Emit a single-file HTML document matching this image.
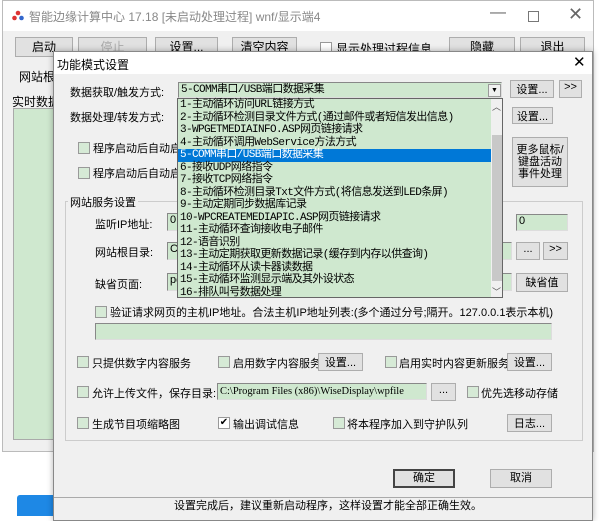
<!DOCTYPE html>
<html><head><meta charset="utf-8"><style>
*{box-sizing:border-box;margin:0;padding:0}
body{width:600px;height:516px;overflow:hidden;background:#fff;font-family:"Liberation Sans","Noto Sans CJK SC",sans-serif;font-size:11px;color:#000;position:relative}
.a{position:absolute;white-space:nowrap}
.btn{position:absolute;background:#e1e1e1;border:1px solid #adadad;text-align:center;font-size:11px}
.cb{position:absolute;width:12px;height:12px;border:1px solid #999;background:#d6ead6}
.in{position:absolute;background:#cfe8cf;border:1px solid #888;border-right-color:#ddd;border-bottom-color:#ddd;font-size:11px;padding-left:2px;overflow:hidden}
.it{position:absolute;left:2px;height:12.5px;line-height:12.5px;font-size:11px;font-family:"Liberation Mono","Noto Sans CJK SC",monospace;letter-spacing:-0.6px}
</style></head><body>
<!-- main window -->
<div class="a" style="left:2px;top:0;width:592px;height:452px;background:#f0f0f0;border:1px solid #bbb"></div>
<div class="a" style="left:3px;top:1px;width:590px;height:30px;background:#fff"></div>
<svg class="a" style="left:12px;top:10px" width="12" height="11"><circle cx="6" cy="3" r="2.3" fill="#d33"/><circle cx="2.5" cy="8" r="2.3" fill="#d33"/><circle cx="9.5" cy="8" r="2.3" fill="#36c"/></svg>
<div class="a" style="left:29px;top:8px;color:#888;font-size:12px">智能边缘计算中心 17.18 [未启动处理过程] wnf/显示端4</div>
<div class="a" style="left:490px;top:4px;color:#666;font-size:16px">—</div>
<div class="a" style="left:528px;top:11px;width:11px;height:11px;border:1px solid #777"></div>
<div class="a" style="left:568px;top:4px;color:#666;font-size:18px">✕</div>
<div class="btn" style="left:15px;top:37px;width:58px;height:20px;font-size:12px">启动</div>
<div class="btn" style="left:78px;top:37px;width:69px;height:20px;color:#aaa;font-size:12px">停止</div>
<div class="btn" style="left:155px;top:37px;width:63px;height:20px;font-size:12px">设置...</div>
<div class="btn" style="left:232px;top:37px;width:65px;height:20px;font-size:12px">清空内容</div>
<div class="cb" style="left:320px;top:42px;background:#fff"></div>
<div class="a" style="left:336px;top:40px;font-size:12px">显示处理过程信息</div>
<div class="btn" style="left:449px;top:37px;width:66px;height:20px;font-size:12px">隐藏</div>
<div class="btn" style="left:520px;top:37px;width:65px;height:20px;font-size:12px">退出</div>
<div class="a" style="left:19px;top:68px;font-size:12px">网站根</div>
<div class="a" style="left:12px;top:93px;font-size:12px">实时数据</div>
<div class="a" style="left:13px;top:108px;width:45px;height:332px;background:#cfe8cf;border:1px solid #aaa"></div>
<div class="a" style="left:3px;top:452px;width:50px;height:64px;background:#fff"></div>
<div class="a" style="left:17px;top:495px;width:40px;height:21px;background:#1e88e5;border-radius:3px 0 0 0"></div>
<!-- dialog -->
<div class="a" style="left:53px;top:51px;width:540px;height:470px;background:#f0f0f0;border:1px solid #888;box-shadow:0 0 6px rgba(0,0,0,.3)"></div>
<div class="a" style="left:54px;top:52px;width:538px;height:22px;background:#fff"></div>
<div class="a" style="left:57px;top:56px;font-size:12px">功能模式设置</div>
<div class="a" style="left:573px;top:53px;font-size:15px">✕</div>
<div class="a" style="left:70px;top:84px">数据获取/触发方式:</div>
<div class="a" style="left:70px;top:109px">数据处理/转发方式:</div>
<div class="in" style="left:178px;top:82px;width:324px;height:16px;line-height:14px;font-family:'Liberation Mono','Noto Sans CJK SC',monospace;letter-spacing:-0.6px">5-COMM串口/USB端口数据采集</div>
<div class="a" style="left:488px;top:84px;width:13px;height:13px;background:#f0f0f0;border:1px solid #999;font-size:7px;text-align:center;line-height:12px">▼</div>
<div class="btn" style="left:510px;top:80px;width:44px;height:18px">设置...</div>
<div class="btn" style="left:559px;top:80px;width:23px;height:18px">&gt;&gt;</div>
<div class="btn" style="left:512px;top:107px;width:41px;height:17px">设置...</div>
<div class="cb" style="left:78px;top:142px"></div><div class="a" style="left:93px;top:140px">程序启动后自动启</div>
<div class="cb" style="left:78px;top:167px"></div><div class="a" style="left:93px;top:165px">程序启动后自动启</div>
<div class="btn" style="left:512px;top:137px;width:56px;height:50px;line-height:12px;padding-top:6px">更多鼠标/<br>键盘活动<br>事件处理</div>
<!-- group -->
<div class="a" style="left:65px;top:201px;width:518px;height:240px;border:1px solid #ccc"></div>
<div class="a" style="left:68px;top:194px;background:#f0f0f0;padding:0 2px">网站服务设置</div>
<div class="a" style="left:95px;top:216px">监听IP地址:</div>
<div class="a" style="left:95px;top:244px">网站根目录:</div>
<div class="a" style="left:95px;top:276px">缺省页面:</div>
<div class="in" style="left:167px;top:213px;width:20px;height:18px">0.</div>
<div class="in" style="left:167px;top:242px;width:20px;height:18px">C:</div>
<div class="in" style="left:167px;top:273px;width:20px;height:18px">pc</div>
<div class="in" style="left:490px;top:242px;width:22px;height:18px;border-left:none"></div>
<div class="in" style="left:490px;top:273px;width:22px;height:18px;border-left:none"></div>
<div class="in" style="left:516px;top:214px;width:52px;height:17px">0</div>
<div class="btn" style="left:516px;top:242px;width:24px;height:18px">...</div>
<div class="btn" style="left:543px;top:242px;width:25px;height:18px">&gt;&gt;</div>
<div class="btn" style="left:516px;top:273px;width:52px;height:19px">缺省值</div>
<div class="cb" style="left:95px;top:306px"></div>
<div class="a" style="left:110px;top:304px">验证请求网页的主机IP地址。合法主机IP地址列表:(多个通过分号;隔开。127.0.0.1表示本机)</div>
<div class="in" style="left:95px;top:323px;width:457px;height:17px"></div>
<div class="cb" style="left:77px;top:356px"></div><div class="a" style="left:92px;top:355px">只提供数字内容服务</div>
<div class="cb" style="left:218px;top:356px"></div><div class="a" style="left:233px;top:355px">启用数字内容服务</div>
<div class="btn" style="left:318px;top:353px;width:45px;height:18px">设置...</div>
<div class="cb" style="left:385px;top:356px"></div><div class="a" style="left:399px;top:355px">启用实时内容更新服务</div>
<div class="btn" style="left:507px;top:353px;width:45px;height:18px">设置...</div>
<div class="cb" style="left:77px;top:386px"></div><div class="a" style="left:92px;top:385px">允许上传文件，保存目录:</div>
<div class="in" style="left:217px;top:383px;width:210px;height:17px;font-family:'Liberation Serif',serif;font-size:10.5px;line-height:15px">C:\Program Files (x86)\WiseDisplay\wpfile</div>
<div class="btn" style="left:431px;top:383px;width:25px;height:18px">...</div>
<div class="cb" style="left:467px;top:386px"></div><div class="a" style="left:481px;top:385px">优先选移动存储</div>
<div class="cb" style="left:77px;top:417px"></div><div class="a" style="left:92px;top:416px">生成节目项缩略图</div>
<div class="cb" style="left:218px;top:417px;background:#fff;font-size:10px;line-height:10px;text-align:center">✔</div><div class="a" style="left:233px;top:416px">输出调试信息</div>
<div class="cb" style="left:333px;top:417px"></div><div class="a" style="left:347px;top:416px">将本程序加入到守护队列</div>
<div class="btn" style="left:507px;top:414px;width:45px;height:18px">日志...</div>
<div class="btn" style="left:393px;top:469px;width:62px;height:19px;border:2px solid #444;line-height:15px">确定</div>
<div class="btn" style="left:490px;top:469px;width:62px;height:19px;line-height:17px">取消</div>
<div class="a" style="left:54px;top:497px;width:538px;height:1px;background:#aaa"></div>
<div class="a" style="left:174px;top:497px">设置完成后，建议重新启动程序，这样设置才能全部正确生效。</div>
<!-- dropdown -->
<div class="a" style="left:177px;top:98px;width:326px;height:200px;background:#cfe8cf;border:1px solid #666">
<div class="a" style="left:313px;top:0;width:11px;height:198px;background:#f0f0f0"></div>
<div class="a" style="left:314px;top:36px;width:10px;height:146px;background:#c8c8c8"></div>
<div class="a" style="left:314px;top:1px;font-size:9px;color:#555">︿</div>
<div class="a" style="left:314px;top:186px;font-size:9px;color:#555">﹀</div>
<div class="a" style="left:0;top:50px;width:313px;height:12.5px;background:#0078d7"></div>
<div class="it" style="top:0">1-主动循环访问URL链接方式</div>
<div class="it" style="top:12.5px">2-主动循环检测目录文件方式(通过邮件或者短信发出信息)</div>
<div class="it" style="top:25px">3-WPGETMEDIAINFO.ASP网页链接请求</div>
<div class="it" style="top:37.5px">4-主动循环调用WebService方法方式</div>
<div class="it" style="top:50px;color:#fff">5-COMM串口/USB端口数据采集</div>
<div class="it" style="top:62.5px">6-接收UDP网络指令</div>
<div class="it" style="top:75px">7-接收TCP网络指令</div>
<div class="it" style="top:87.5px">8-主动循环检测目录Txt文件方式(将信息发送到LED条屏)</div>
<div class="it" style="top:100px">9-主动定期同步数据库记录</div>
<div class="it" style="top:112.5px">10-WPCREATEMEDIAPIC.ASP网页链接请求</div>
<div class="it" style="top:125px">11-主动循环查询接收电子邮件</div>
<div class="it" style="top:137.5px">12-语音识别</div>
<div class="it" style="top:150px">13-主动定期获取更新数据记录(缓存到内存以供查询)</div>
<div class="it" style="top:162.5px">14-主动循环从读卡器读数据</div>
<div class="it" style="top:175px">15-主动循环监测显示端及其外设状态</div>
<div class="it" style="top:187.5px">16-排队叫号数据处理</div>
</div>
</body></html>
